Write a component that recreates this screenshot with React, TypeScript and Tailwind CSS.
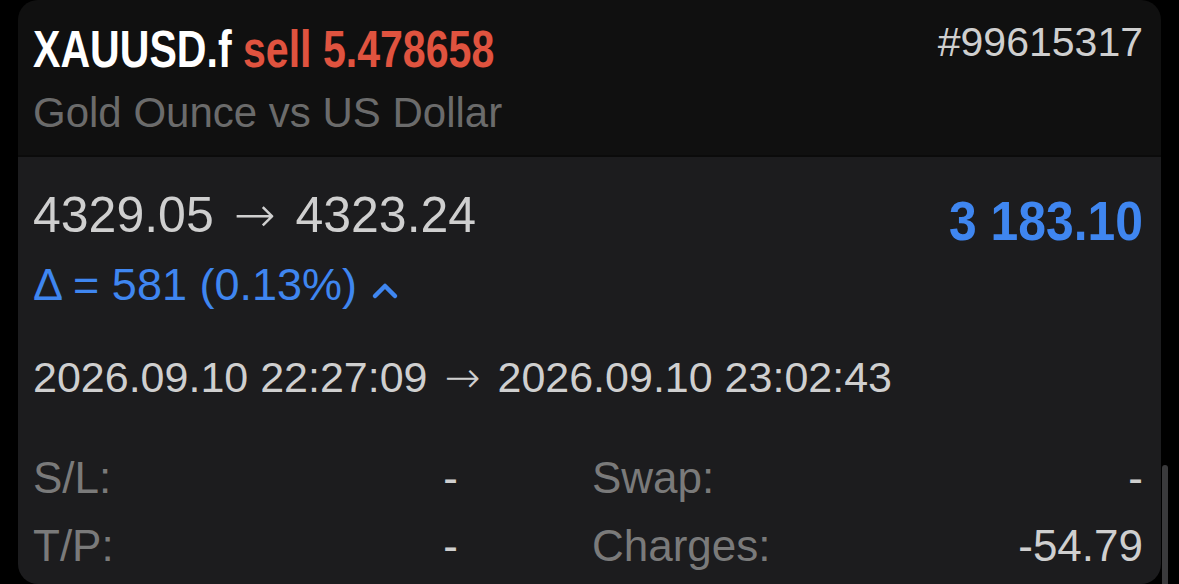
import React from "react";

const helv = { fontFamily: '"Liberation Sans", Arial, sans-serif' };
const arrowFont = { fontFamily: '"DejaVu Sans", sans-serif' };

export default function App() {
  return (
    <div className="relative w-[1179px] h-[584px] bg-black overflow-hidden" style={helv}>
      <div className="ml-[18px] w-[1143px] h-[584px] rounded-[20px] overflow-hidden flex flex-col">
        <div className="h-[157px] bg-[#101010] border-b-2 border-[#0b0b0b] pl-[15px] pr-[18px] flex flex-col">
          <div className="flex justify-between items-start">
            <div className="mt-[23px] text-[52px] font-bold leading-none whitespace-nowrap origin-left scale-x-[0.79]">
              <span className="text-white">XAUUSD.f</span>{" "}
              <span className="text-[#e0533f]">sell 5.478658</span>
            </div>
            <div className="text-[41px] leading-none mt-[22px] text-[#cfcfcf]">#99615317</div>
          </div>
          <div className="text-[42px] leading-none mt-[17px] text-[#6b6b6b]">Gold Ounce vs US Dollar</div>
        </div>
        <div className="flex-1 bg-[#1c1c1e] pl-[15px] pr-[18px] flex flex-col">
          <div className="flex justify-between items-start mt-[33px]">
            <div className="text-[50px] leading-none text-[#cfcfcf] whitespace-nowrap">
              4329.05 <span style={arrowFont} className="font-extralight mx-[6px]">→</span> 4323.24
            </div>
            <div className="mt-[3px] text-[56px] font-bold leading-none text-[#3f86f0] whitespace-nowrap origin-right scale-x-[0.89]">
              3 183.10
            </div>
          </div>
          <div className="flex items-center mt-[13px] text-[45px] leading-none text-[#3f86f0]">
            <span>Δ = 581 (0.13%)</span>
            <svg width="28" height="20" viewBox="0 0 28 20" className="ml-[14px] mt-[10px]">
              <path d="M4 16 L14 6 L24 16" fill="none" stroke="#3f86f0" strokeWidth="4.5" strokeLinecap="round" strokeLinejoin="round" />
            </svg>
          </div>
          <div className="mt-[49px] text-[43px] leading-none text-[#cfcfcf] whitespace-nowrap">
            2026.09.10 22:27:09 <span style={arrowFont} className="font-extralight mx-[5px]">→</span> 2026.09.10 23:02:43
          </div>
          <div className="mt-[57px] grid grid-cols-[425px_1fr] gap-x-[134px] gap-y-[24px] text-[44px] leading-none">
            <div className="flex justify-between"><span className="text-[#7a7a7a]">S/L:</span><span className="text-[#cfcfcf]">-</span></div>
            <div className="flex justify-between"><span className="text-[#7a7a7a]">Swap:</span><span className="text-[#cfcfcf]">-</span></div>
            <div className="flex justify-between"><span className="text-[#7a7a7a]">T/P:</span><span className="text-[#cfcfcf]">-</span></div>
            <div className="flex justify-between"><span className="text-[#7a7a7a]">Charges:</span><span className="text-[#cfcfcf]">-54.79</span></div>
          </div>
        </div>
      </div>
      <div className="absolute left-[1162px] top-[465px] w-[6px] h-[130px] rounded-full bg-[#3a3a3c]" />
    </div>
  );
}
